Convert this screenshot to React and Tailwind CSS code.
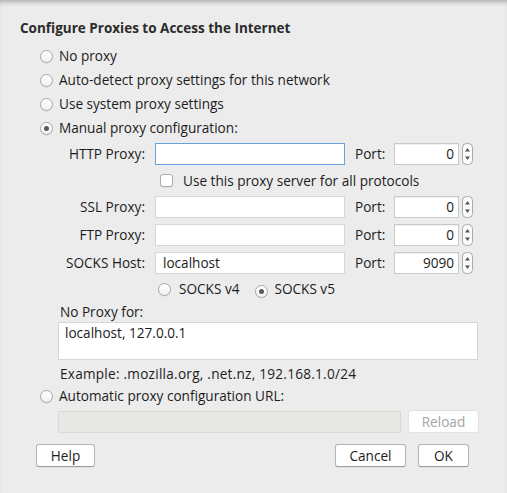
import React from "react";

function Radio({ checked }) {
  return (
    <span className="relative inline-flex h-[13px] w-[13px] shrink-0 items-center justify-center rounded-full border border-[#a7a7a7] bg-gradient-to-b from-white to-[#f1f1f1] shadow-[0_0.5px_0.5px_rgba(0,0,0,0.12)]">
      {checked && <span className="h-[5px] w-[5px] rounded-full bg-[#5a5a5a]" />}
    </span>
  );
}

function RadioRow({ checked, children }) {
  return (
    <div className="flex h-6 items-center">
      <Radio checked={checked} />
      <span className="ml-[6px]">{children}</span>
    </div>
  );
}

function Spinner() {
  return (
    <svg width="11" height="22" viewBox="0 0 11 22" className="ml-[3px] shrink-0">
      <rect x="0.5" y="0.5" width="10" height="21" rx="4" fill="#fbfbfb" stroke="#a9a9a9" />
      <path d="M5.5 5 L8 8.5 L3 8.5 Z" fill="#555" />
      <path d="M5.5 17 L8 13.5 L3 13.5 Z" fill="#555" />
    </svg>
  );
}

function FieldRow({ label, value, port, focused }) {
  return (
    <div className="flex h-[22px] items-center">
      <span className="w-[105px] whitespace-nowrap text-right">{label}</span>
      <div
        className={
          "ml-[10px] flex h-[22px] w-[190px] items-center bg-white px-[7px] " +
          (focused ? "border border-[#6d9fe3]" : "border border-[#d6d6d6]")
        }
      >
        {value}
      </div>
      <span className="ml-[10px] w-[39px]">Port:</span>
      <div className="flex h-[22px] w-[65px] items-center justify-end border border-[#c9c9c9] bg-white px-[4px] shadow-[inset_0_1px_0_rgba(0,0,0,0.06)]">
        {port}
      </div>
      <Spinner />
    </div>
  );
}

function Button({ children, className = "", disabled }) {
  return (
    <div
      className={
        "flex h-[23px] items-center justify-center rounded-[3px] border bg-white " +
        (disabled
          ? "border-[#e2e2e2] text-[#a3a3a3] "
          : "border-[#b4b4b4] border-b-[#9d9d9d] shadow-[0_0.5px_0.5px_rgba(0,0,0,0.1)] ") +
        className
      }
    >
      {children}
    </div>
  );
}

export default function App() {
  return (
    <div
      className="relative h-[493px] w-[507px] overflow-hidden bg-[#ececec] text-[13.6px] leading-4 text-[#1c1c1c] shadow-[inset_0_5px_5px_-3px_rgba(0,0,0,0.28)]"
      style={{ fontFamily: "'Open Sans', 'Liberation Sans', sans-serif" }}
    >
      <div className="pl-5 pt-5">
        <div className="text-[13.5px] font-bold text-[#2b2b2b]">Configure Proxies to Access the Internet</div>
      </div>

      <div className="mt-2 pl-[40px]">
        <RadioRow>No proxy</RadioRow>
        <RadioRow>Auto-detect proxy settings for this network</RadioRow>
        <RadioRow>Use system proxy settings</RadioRow>
        <RadioRow checked>Manual proxy configuration:</RadioRow>
      </div>

      <div className="mt-[3px] flex flex-col gap-[6px] pl-[40px]">
        <FieldRow label="HTTP Proxy:" port="0" focused />
        <div className="flex h-[19px] items-center pl-[120px]">
          <span className="h-[13px] w-[13px] rounded-[3px] border border-[#acacac] bg-white shadow-[0_0.5px_0.5px_rgba(0,0,0,0.1)]" />
          <span className="ml-[10px]">Use this proxy server for all protocols</span>
        </div>
        <FieldRow label="SSL Proxy:" port="0" />
        <FieldRow label="FTP Proxy:" port="0" />
        <FieldRow label="SOCKS Host:" value="localhost" port="9090" />
      </div>

      <div className="mt-[5px] flex h-5 items-center pl-[158px]">
        <Radio />
        <span className="ml-[8px]">SOCKS v4</span>
        <span className="ml-[16px]">
          <Radio checked />
        </span>
        <span className="ml-[6px]">SOCKS v5</span>
      </div>

      <div className="pl-[60px] pt-[5px]">No Proxy for:</div>
      <div className="ml-[58px] mt-[2px] h-[38px] w-[420px] border border-[#d6d6d6] bg-white px-[6px] pt-[2px]">
        localhost, 127.0.0.1
      </div>
      <div className="mt-[6px] pl-[60px] tracking-[0.25px]">Example: .mozilla.org, .net.nz, 192.168.1.0/24</div>

      <div className="mt-[2px] pl-[40px]">
        <RadioRow>Automatic proxy configuration URL:</RadioRow>
      </div>

      <div className="mt-[2px] flex items-center pl-[58px]">
        <div className="h-[22px] w-[343px] border border-[#d9d9d6] bg-[#e8e8e5]" />
        <Button disabled className="ml-[7px] w-[71px]">Reload</Button>
      </div>

      <div className="mt-[11px] flex items-center">
        <Button className="ml-[36px] w-[59px]">Help</Button>
        <Button className="ml-[240px] w-[71px]">Cancel</Button>
        <Button className="ml-[12px] w-[51px]">OK</Button>
      </div>
    </div>
  );
}
